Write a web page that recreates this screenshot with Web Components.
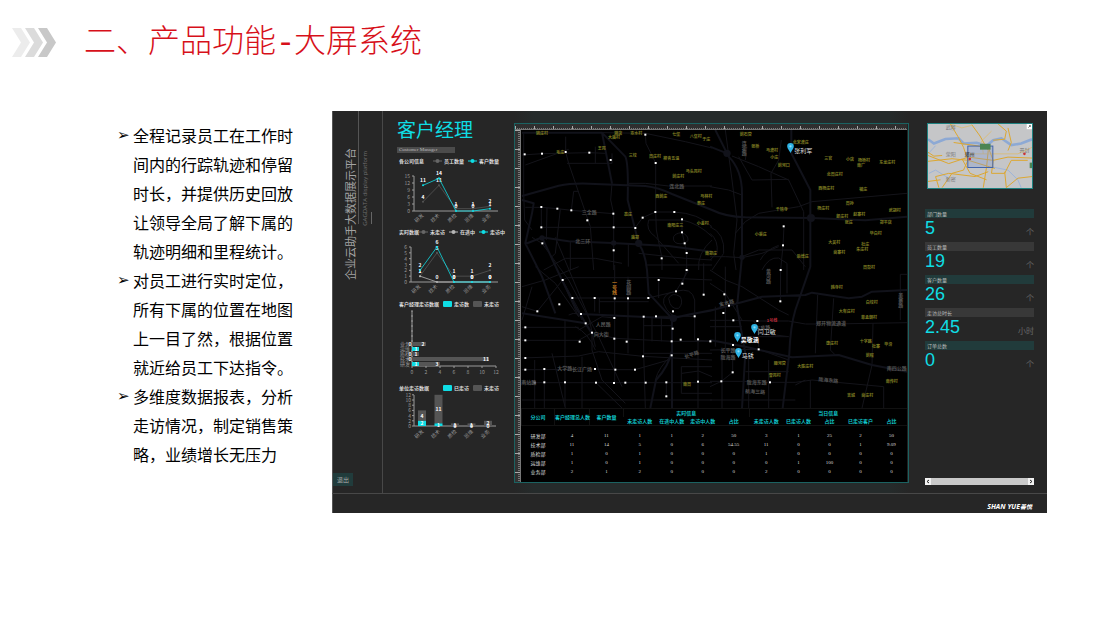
<!DOCTYPE html>
<html lang="zh-CN">
<head>
<meta charset="utf-8">
<title>产品功能-大屏系统</title>
<style>
html,body{margin:0;background:#fff}
body{font-family:"Liberation Sans","Noto Sans CJK SC",sans-serif;color:#000}
feature-list li::before{content:"➢";position:absolute;left:-16px;top:0;font-family:"DejaVu Sans",sans-serif;font-size:15px}
</style>
</head>
<body>
<feature-slide>
  <slide-header slot="head">二、产品功能<span>-</span>大屏系统</slide-header>
  <feature-list slot="text">
    <li>全程记录员工在工作时间内的行踪轨迹和停留时长，并提供历史回放让领导全局了解下属的轨迹明细和里程统计。</li>
    <li>对员工进行实时定位，所有下属的位置在地图上一目了然，根据位置就近给员工下达指令。</li>
    <li>多维度数据报表，分析走访情况，制定销售策略，业绩增长无压力</li>
  </feature-list>
  <data-wall slot="wall"></data-wall>
</feature-slide>

<script>
const define = (name, css, html) => customElements.define(name, class extends HTMLElement {
  constructor() {
    super();
    const root = this.attachShadow({mode: 'open'});
    root.innerHTML = `<style>${css}</style>${typeof html === 'function' ? html(this) : html}`;
  }
});

/* ---------- slide frame ---------- */
define('slide-header', `
:host{display:flex;align-items:center;gap:28px;padding:18px 12px 0;height:48px;color:#d7101a}
svg{flex:none}
h1{margin:0;font:300 32px/48px "Noto Sans CJK SC",sans-serif;white-space:nowrap;padding-bottom:2px}
::slotted(span){display:inline-block;width:18px;text-align:center;font-family:"Liberation Mono",monospace}
`, `<svg width="44" height="29" viewBox="0 0 44 29" aria-hidden="true">
<path fill="#ececec" d="M0 0H9L18 14.500 9 29H0L9 14.500z"/><path fill="#dbdbdb" d="M13 0H22L31 14.500 22 29H13L22 14.500z"/><path fill="#c8c8c8" d="M26 0H35L44 14.500 35 29H26L35 14.500z"/></svg>
<h1><slot></slot></h1>`);

define('feature-list', `
:host{display:block}
ul{margin:0;padding:10px 36px 0 133px;list-style:none;font:16px/29px "Noto Sans CJK SC",sans-serif}
::slotted(li){list-style:none;position:relative;display:block}
`, `<ul><slot></slot></ul>`);

define('feature-slide', `
:host{display:grid;grid-template-columns:332px minmax(0,1fr);padding:0 63px 48px 0}
.head{grid-column:1/-1;padding-bottom:45px}
::slotted(feature-list){min-width:0}
`, `<div class="head"><slot name="head"></slot></div><slot name="text"></slot><slot name="wall"></slot>`);

/* ---------- charts ---------- */
const CYAN = '#0fdde4', GRAY = '#555', PALE = '#b5b5b5';
const CATS = ['研发', '技术', '质检', '运维', '业务'];
const chartCss = `
:host{display:block}
header{display:flex;align-items:center;justify-content:space-between;height:8px;padding:0 15px 0 16px;font:bold 5px/8px "Noto Sans CJK SC",sans-serif;color:#ddd;white-space:nowrap}
h3{margin:0;font:inherit}
.keys{display:flex;gap:4px}
.keys span{display:flex;align-items:center;gap:2px}
svg{display:block;width:100%;overflow:visible}
text{font:5px "Noto Sans CJK SC",sans-serif;fill:#999}
.v{font-weight:bold;fill:#fff;text-anchor:middle}
.a{stroke:#999;stroke-width:1;fill:none}
`;
const head = (title, keys, line) => `<header><h3>${title}</h3><div class="keys">${keys.map(([n, c]) =>
  `<span><svg style="width:9px;height:6px" viewBox="0 0 9 6">${line
    ? `<path d="M0 3H9" stroke="${c}"/><circle cx="4.500" cy="3" r="2" fill="${c}"/>`
    : `<rect width="9" height="6" rx="1" fill="${c}"/>`}</svg>${n}</span>`).join('')}</div></header>`;
const catText = (x, y, t) => `<text text-anchor="end" transform="translate(${x} ${y}) rotate(-42)">${t}</text>`;

function lineChart({title, keys, x0, max, step, xs, series}) {
  const top = 11, h = 35, y = v => top + h - v * h / max;
  let s = `<path class="a" d="M${x0} ${top}V${top + h}H115"/>`;
  for (let v = 0; v <= max; v += step) s += `<path class="a" d="M${x0 - 2} ${y(v)}H${x0}"/><text x="${x0 - 4}" y="${y(v) + 2}" text-anchor="end">${v}</text>`;
  xs.forEach((x, i) => s += catText(x + 1, top + h + 5, CATS[i]));
  series.forEach(([c, vals]) => {
    s += `<polyline fill="none" stroke="${c}" stroke-width=".8" points="${vals.map((v, i) => xs[i] + ',' + y(v)).join(' ')}"/>`;
    vals.forEach((v, i) => s += `<circle cx="${xs[i]}" cy="${y(v)}" r="1" fill="${c}"/><text class="v" x="${xs[i]}" y="${y(v) - 3}">${v}</text>`);
  });
  return head(title, keys, true) + `<svg viewBox="0 0 131 54">${s}</svg>`;
}
define('company-chart', chartCss, lineChart({title: '各公司信息', keys: [['员工数量', '#666'], ['客户数量', CYAN]],
  x0: 31, max: 15, step: 3, xs: [40, 56, 73, 90, 107], series: [[GRAY, [4, 11, 1, 1, 2]], [CYAN, [11, 14, 0, 0, 1]]]}));
define('realtime-chart', chartCss, lineChart({title: '实时数据', keys: [['未走访', '#666'], ['在途中', PALE], ['走访中', CYAN]],
  x0: 28, max: 6, step: 1, xs: [37, 54, 71, 89, 107], series: [[GRAY, [1, 5, 1, 1, 2]], [PALE, [1, 0, 0, 0, 0]], [CYAN, [2, 6, 0, 0, 0]]]}));

define('manager-chart', chartCss, () => {
  const rows = [['业务', 0, 2], ['运维', 1, 0], ['质检', 0, 1], ['技术', 0, 11], ['研发', 1, 3]];
  let s = '<path class="a" d="M29 3V58H113"/>';
  for (let y = 3; y < 58; y += 5) s += `<path class="a" d="M28 ${y}H30"/>`;
  for (let v = 0; v <= 12; v += 2) s += `<path class="a" d="M${29 + v * 7} 58v2"/><text x="${29 + v * 7}" y="66" text-anchor="middle">${v}</text>`;
  rows.forEach(([n, a, b], i) => {
    const y = 34 + i * 5;
    s += `<text x="17" y="${y + 4}">${n}</text><rect x="29" y="${y}" width="${a * 7}" height="4" fill="${CYAN}"/><rect x="${29 + a * 7}" y="${y}" width="${b * 7}" height="4" fill="${GRAY}"/>`;
    s += `<text class="v" x="${a ? 33 : 27}" y="${y + 4}">${a}</text>`;
    if (b) s += `<text class="v" x="${b === 1 ? 33 : 26 + (a + b) * 7}" y="${y + 4}">${b}</text>`;
  });
  return head('客户经理走访数据', [['走访数', CYAN], ['未走访', GRAY]]) + `<svg viewBox="0 0 131 70">${s}</svg>`;
});
define('unit-chart', chartCss, () => {
  const d = [[2, 4], [1, 11], [0, 1], [0, 1], [0, 2]], y = v => 34 - v * 2.6;
  let s = '<path class="a" d="M31 3V34H113"/>';
  for (let v = 0; v <= 12; v += 2) s += `<path class="a" d="M29 ${y(v)}H31"/><text x="28" y="${y(v) + 2}" text-anchor="end">${v}</text>`;
  d.forEach(([a, b], i) => {
    const x = 39 + i * 33 / 2;
    s += `<rect x="${x - 4}" y="${y(a + b)}" width="8" height="${b * 2.6}" fill="${GRAY}"/><rect x="${x - 4}" y="${y(a)}" width="8" height="${a * 2.6}" fill="${CYAN}"/>`;
    s += `<text class="v" x="${x}" y="${y(a / 2) + 2}">${a}</text><text class="v" x="${x}" y="${y(a + b / 2) + 2}">${b}</text>` + catText(x + 2, 40, CATS[i]);
  });
  return head('单位走访数据', [['已走访', CYAN], ['未走访', GRAY]]) + `<svg viewBox="0 0 131 50">${s}</svg>`;
});

/* ---------- city map ---------- */
const MX = 27, MY = 30, MW = 1158, MH = 834;
const place = (x, y) => `left:${((x - MX) / MW * 100).toFixed(2)}%;top:${((y - MY) / MH * 100).toFixed(2)}%`;
const MAJOR = `M30 38H270L340 110Q350 130 347 240L380 370Q400 400 405 450L410 520 480 595V690Q470 740 432 780L415 864
M270 38L300 190M30 228L140 197Q185 188 250 192L400 198Q440 203 480 222L600 270Q640 290 700 292L900 294 1060 301 1185 290
M40 372L90 352Q140 360 170 364L300 369 470 378 600 395M838 30V100L895 210V440L850 570Q835 620 832 700L812 864
M594 80L645 100M610 30L650 110Q690 150 690 220V410L675 560 700 700 690 864M480 595Q540 580 594 572L750 530 880 525 900 518 1010 535 1050 530 1080 515 1185 510
M594 660L700 680 840 712 980 705 1080 735 1185 755M30 240L65 250 60 280 40 370 90 470 130 580
M207 582L480 595 600 570M480 595V864M30 580L220 610 240 640 190 560 150 480 90 352`;
const MINOR = `M35 40V220L38 300 60 330M30 105L90 101 232 98 280 100M161 50V96L170 130 235 320 245 450M165 130H300V100M250 80V130M40 135L170 88
M300 190L296 240 305 281V450M400 44L402 70 431 129V276L433 330 450 415V450M270 38L400 40 520 65 600 84M350 190L400 190 470 198H600
M40 262H88L136 266 178 271 304 281M88 261V322H370L392 293 430 276H487Q560 280 600 320M178 271L185 214H200M105 264L103 360M145 268L130 400 118 412
M175 364V450M95 450L160 415H250L330 430M349 370V440M410 300H510Q560 310 600 350M410 300Q400 330 430 350L500 430M510 298V337L518 370 524 399V450M485 350Q490 340 508 338 530 345 528 362 515 375 495 370 482 365 485 350
M380 400L520 415 600 420M400 435H600M560 450Q555 400 600 360M60 352L90 370 170 480 260 650 330 800M90 352L200 590M130 352L230 590 250 680M70 440L130 490 200 590
M30 560L76 574 152 480 181 534 207 582 221 610 240 638 310 655 480 664H600M152 480L165 473H440L600 480M181 534H410M248 534V575M262 534V580M262 545H410M308 435V790M348 470V700M307 594L270 590 200 630M30 622H200M30 661H200L240 638
M30 714L200 708 260 695 393 709 600 720M30 749H97L249 747 310 749H369L470 720M30 788H600M68 720V864M97 749V864M159 600V860M210 710V864M252 788L330 864M240 638V690L270 780 340 850M395 590V700L400 864M420 590V664M448 590V664M395 617H480M432 589H548V540Q540 500 492 514 450 520 455 550 470 590 500 590M470 535Q480 515 505 530 515 550 500 565 475 570 470 535M492 514L530 450M511 491L524 450M548 589V660L600 664M575 524V430M409 534L492 514M440 480V534M395 700H600M480 706Q440 740 430 780M508 740H600M508 740V820H600M510 760L560 753 600 770M558 658V864M463 787V829
M30 500L100 480 200 440M60 500L30 600M120 700L160 864M170 585Q200 570 210 600M190 620Q230 640 250 690M594 320Q640 340 635 400L600 450M594 340Q620 360 615 400L594 420M640 30L660 180 675 300 665 400 672 450M594 200L650 210 690 225M700 120L705 80M680 110L720 180 830 178M660 108L740 140 830 180 875 275V450M808 60L800 120 777 160 780 262M670 340L700 305 740 280 860 260 900 245 1185 220M816 319L813 376 806 450 805 545M690 410L740 390H840L880 440M745 420Q760 390 800 376M594 410L640 410 690 413 750 400 800 380M750 450Q770 410 800 414L825 430V520
M594 450L640 480 690 500 800 570 830 585M594 490L640 520 690 600M640 440V700M664 601H594M664 601L736 603H830L880 612 960 612 1185 608M917 525L910 700M965 535L955 690 970 705M1083 610L1080 735 1050 864M1140 864M594 690L740 688 830 720M630 700V864M662 700V757L628 784 594 800M710 700V864M770 720V864M594 784H690L774 787H850L900 780 1115 800V864M895 780V864M700 755H830M740 620V680M690 650H830M1185 463H1165V530M1165 540V600M850 795L880 780M594 620H690M610 560V680M725 603L750 640 830 650M30 840H600M594 840H850`;
const DOTS = `38,103 90,101 161,96 232,98 296,120 400,44 431,129 88,261 136,266 178,271 304,281 226,301 430,276 487,276 392,293 510,298 88,322 305,322 370,324 510,337 518,370 91,370 305,391 524,399 449,415 815,319 813,376 806,450 152,480 440,480 524,450 511,491 181,534 248,534 308,535 348,535 409,534 492,514 575,524 142,553 76,574 207,582 307,594 395,590 432,589 483,574 548,589 221,610 40,622 482,626 240,638 40,661 203,665 307,656 344,665 479,664 506,659 558,658 595,664 40,714 393,709 479,706 40,749 97,747 249,747 310,749 369,749 68,788 97,787 159,787 252,788 306,789 340,788 401,788 463,787 558,785 463,829 637,523 651,557 805,544 634,579 664,601 736,603 663,675 740,688 662,757 628,784 774,787`;
const VILLAGES = `姚庄村,90,38 姚店,319,38 大庙村,306,52 京水村,373,40 七堡,493,42 八堡村,551,49 于庄,583,57 毛庄,145,95 王岗,269,84 三坟,362,106 周庄村,429,107 柳青五温,478,115 马头岗村,545,154 前庄村,499,168 西前庄,448,229 马林村,583,229 祭庄,567,248 高庄,348,283 南阳庄三,490,314 小金村,572,310 庙郑,369,352 南郑庄,597,398 前石营,701,43 张桥,730,77 马渡村,780,90 小庄,787,112 北宋渡庄,866,66 前河口,815,135 三官,949,114 小店,1014,117 杨桥村,1056,119 南厂,1047,136 东龙庄村,1126,125 北周庄村,968,162 西杨庄村,943,203 毓庄,1054,208 周孙,1013,250 杨庄村,934,265 千禧寺,809,267 武胡村,1148,270 郎庄村,991,289 赵寨村,1042,283 张庄,1010,307 郑平店,1121,307 毕白村,1091,338 小渠庄,746,343 大吴村,967,367 杜庄,1060,372 朱庄村,1051,387 尚寨村,982,395 后博庄,872,409 周彭村,1071,441 南周,525,791 韩寺村,974,502 白坟村,1079,545 大有庄村,1004,572 菲孟朝村,1071,591 康庄村,960,670 十字路,1061,664 毕滑,1129,673 杜寨,1092,678 前程,1073,706 顺河营,803,730 大陈庄村,880,738 雪岗村,788,766 南传村,1139,783 吉城,1017,825 尚庄村,1066,826`;
const ROADS = `连北路,494,198,0 三全路,232,277,0 北三环,212,364,0 人民路,274,613,0 向大街,268,643,0 大学路,158,745,0 长江广场,210,747,0 长平路,540,697,-18 南站路,50,785,0 金水路,645,543,-12 东风路,752,622,-6 郑开物流通道,957,610,0 长平路,648,689,0 陇海路,648,711,0 陇海东路,734,787,0 陇海东路,947,782,6 南四公路,1154,745,0 航海三路,728,815,3`;
const VERT = `连霍路,695,83,g 花园路,349,500,g 黄河路,768,468,g 美寨路,1165,540,g 一号线,306,502,o`;
const span = (cls, t, x, y, extra = '') => `<span class="${cls}" style="${place(+x, +y)};${extra}">${t}</span>`;
const parse = s => s.split(' ').map(v => v.split(','));

define('map-pin', `
:host{position:absolute;width:7px;height:10px;margin:-4px 0 0 -3px}
svg{display:block;width:7px;height:10px}
b{position:absolute;left:7px;top:4px;font:6px/8px "Noto Sans CJK SC",sans-serif;color:#ddd;white-space:nowrap}
:host([strong]) b{font-weight:bold;color:#fff}
`, `<svg viewBox="0 0 6 9"><path d="M3 0a3 3 0 0 1 3 3C6 5 4 7 3 9 2 7 0 5 0 3a3 3 0 0 1 3-3z" fill="#2fb4e6"/><circle cx="3" cy="3" r="1" fill="#8fdcf5"/></svg><b><slot></slot></b>`);

define('city-map', `
:host{display:block;position:relative;aspect-ratio:386/278;background:#000;overflow:hidden}
svg.r{position:absolute;inset:0;width:100%;height:100%}
span{position:absolute;transform:translate(-50%,-50%);font:bold 4px/6px "Noto Sans CJK SC",sans-serif;white-space:nowrap}
.n{color:#7f7d22}
.g{color:#545454;font-size:5px}
.o{color:#c07a20}
.d{color:#c22d3c;font-size:4px}
.vt{writing-mode:vertical-rl;font-size:5px}
`, () => `<svg class="r" viewBox="${MX} ${MY} ${MW} ${MH}" preserveAspectRatio="none" fill="none" stroke-linejoin="round">
<path d="${MINOR}" stroke="#14141a" stroke-width="3"/><path d="${MAJOR}" stroke="#11121a" stroke-width="6"/>
<g fill="#11121a"><circle cx="305" cy="369" r="8"/><circle cx="380" cy="370" r="11"/><circle cx="897" cy="294" r="12"/><circle cx="484" cy="595" r="11"/><circle cx="90" cy="354" r="8"/><circle cx="645" cy="100" r="11"/><circle cx="690" cy="412" r="8"/></g>
<g fill="#fff">${parse(DOTS).map(([x, y]) => `<rect x="${x - 3}" y="${y - 3}" width="6" height="6"/>`).join('')}</g></svg>`
  + parse(VILLAGES).map(([t, x, y]) => span('n', t, x, y)).join('')
  + parse(ROADS).map(([t, x, y, r]) => span('g', t, x, y, +r ? `rotate:${r}deg` : '')).join('')
  + parse(VERT).map(([t, x, y, c]) => span(c + ' vt', t, x, y)).join('')
  + span('d', '1号线', 780, 600)
  + [['张利军', 835, 80], ['闫卫敏', 725, 625], ['马锈', 677, 697], ['吴敬涵', 674, 649, 'strong']]
    .map(([t, x, y, s = '']) => `<map-pin ${s} style="${place(x, y)}">${t}</map-pin>`).join(''));

/* ---------- visit table ---------- */
const COLS = [33, 35, 34, 33, 31, 31, 31, 34, 31, 31, 31, 31];
const ROWS = [['研发部', 4, 11, 1, 1, 2, 50, 3, 1, 25, 2, 50], ['技术部', 11, 14, 5, 0, 6, '54.55', 11, 0, 0, 1, '9.09'],
  ['质检部', 1, 0, 1, 0, 0, 0, 1, 0, 0, 0, 0], ['运维部', 1, 0, 1, 0, 0, 0, 0, 1, 100, 0, 0], ['业务部', 2, 1, 2, 0, 0, 0, 2, 0, 0, 0, 0]];
define('visit-table', `
:host{display:block;background:#000;padding:0 0 6px}
table{width:100%;border-collapse:collapse;table-layout:fixed;font:5px/9px "Liberation Serif","Noto Sans CJK SC",serif;color:#ddd;text-align:center}
th,td{padding:0;white-space:nowrap}
thead th{color:#11c9ce;font:bold 5px/8px "Noto Sans CJK SC",sans-serif}
thead tr:first-child th{border-left:1px solid #111}
tbody th{font:5px/9px "Noto Sans CJK SC",sans-serif}
thead{border-top:1px solid #111;border-bottom:1px solid #111}
tbody::before{content:"";display:block;height:5px}
`, `<table><colgroup>${COLS.map(c => `<col style="width:${(c / 3.86).toFixed(2)}%">`).join('')}</colgroup>
<thead><tr><th rowspan="2">分公司</th><th rowspan="2">客户经理总人数</th><th rowspan="2">客户数量</th><th colspan="4">实时信息</th><th colspan="5">当日信息</th></tr>
<tr>${['未走访人数', '在途中人数', '走访中人数', '占比', '未走访人数', '已走访人数', '占比', '已走访客户', '占比'].map(t => `<th>${t}</th>`).join('')}</tr></thead>
<tbody>${ROWS.map(r => `<tr><th>${r[0]}</th>${r.slice(1).map(v => `<td>${v}</td>`).join('')}</tr>`).join('')}</tbody></table>`);

/* ---------- framed map panel with rulers ---------- */
define('map-panel', `
:host{display:grid;grid-template-columns:6px minmax(0,1fr);grid-template-rows:6px auto;border:1px solid #1b6261;padding:0 1px 0 0;background:#222}
.top{grid-column:1/-1;border-bottom:1px solid #777;box-sizing:border-box;background:repeating-linear-gradient(90deg,#aaa 0 1px,transparent 1px 19px) bottom/100% 3px no-repeat,repeating-linear-gradient(90deg,#777 0 1px,transparent 1px 2px) bottom/100% 1px no-repeat,#2f2f2f}
.left{border-right:1px solid #777;box-sizing:border-box;background:repeating-linear-gradient(#aaa 0 1px,transparent 1px 19px),repeating-linear-gradient(#777 0 1px,transparent 1px 2px) right/2px 100% no-repeat,#333}
`, `<div class="top"></div><div class="left"></div><div><city-map></city-map><visit-table></visit-table></div>`);

/* ---------- right column ---------- */
define('region-map', `
:host{display:block;position:relative;aspect-ratio:105/65;border:1px solid #1e8180;box-sizing:border-box;background:#c5c6c8;margin:0 1px 0 2px;overflow:hidden}
svg{position:absolute;inset:0;width:100%;height:100%}
span{position:absolute;font:5px/6px "Noto Sans CJK SC",sans-serif;color:#777;white-space:nowrap}
`, `<svg viewBox="57 38 316 196" preserveAspectRatio="none" fill="none">
<path d="M57 85L75 98 110 84 150 82 165 98 205 96 235 105 255 88 280 82 310 103 340 98 373 85" stroke="#8da9d4" stroke-width="8"/><path d="M57 130L80 105M250 170L300 180 330 210 340 234M60 190L80 180 120 205" stroke="#9db4d8" stroke-width="3"/>
<g stroke="#dca62e" stroke-width="3"><path d="M57 125L75 137 100 135M57 135L120 160 180 140 255 150 300 140 373 143M57 153L130 145 180 150 260 175M125 38L150 80 165 110 178 150 165 180 130 190 100 234M190 40L215 75 240 120 235 170 225 234M135 95L240 110 255 150 250 190 290 190 310 150 360 150M90 234L80 200 120 190 200 200 240 185M57 215L95 210M270 38L295 60 290 85 255 88M373 200L330 205 295 234 290 185M160 145L185 190 235 210M300 120L310 95 300 50"/></g>
<path d="M125 38L160 50 190 42M250 60L220 90 225 130M180 130L330 130 373 110" stroke="#e0b95c" stroke-width="2"/>
<rect x="178" y="106" width="76" height="66" fill="#7f97cf55" stroke="#3f63ac" stroke-width="3"/><rect x="215" y="99" width="32" height="18" fill="#4c8452"/><rect x="366" y="157" width="7" height="17" fill="#4c8452"/>
<circle cx="184" cy="146" r="4" fill="#c33"/><circle cx="350" cy="130" r="4" fill="#c33"/><rect x="357" y="38" width="16" height="16" fill="#fff"/><path d="M362 49l6-6m-4 0h4v4" stroke="#333" stroke-width="2"/></svg>
<span style="left:17%;top:0">武陟</span><span style="left:17%;top:43%">荥阳</span><span style="left:35%;top:43%;color:#222">郑州</span><span style="left:88%;top:36%">开封</span><span style="left:17%;top:81%">新密</span>`);

define('stat-item', `
:host{display:block;height:33px;color:#0fdde4}
h4{margin:0;padding:0 2px;background:#383838;color:#bbb;font:5px/9px "Noto Sans CJK SC",sans-serif}
:host([tint]) h4{background:#213b3b}
div{display:flex;justify-content:space-between;align-items:flex-start}
strong{font:18px/21px "Liberation Sans",sans-serif}
small{font:8px/12px "Noto Sans CJK SC",sans-serif;color:#686868;padding-top:8px}
`, el => `<h4>${el.getAttribute('label')}</h4><div><strong>${el.getAttribute('value')}</strong><small>${el.getAttribute('unit') || '个'}</small></div>`);

define('scroll-strip', `
:host{display:flex;justify-content:space-between;height:7px;background:#c9c9c9;margin-top:auto}
button{width:6px;height:7px;padding:0;border:0;background:#f2f2f2;display:block}
svg{display:block;margin:auto}
`, `<button aria-label="左"><svg width="4" height="5" fill="none" stroke="#222"><path d="M3 1L1 2.500 3 4"/></svg></button><button aria-label="右"><svg width="4" height="5" fill="none" stroke="#222"><path d="M1 1L3 2.500 1 4"/></svg></button>`);

/* ---------- left rail ---------- */
define('side-rail', `
:host{display:flex;flex-direction:column;justify-content:space-between;align-items:flex-start;border-right:1px solid #484848}
.t{display:flex;align-items:flex-start}
h2,p{margin:0;font-weight:normal;writing-mode:vertical-rl;text-orientation:sideways;rotate:180deg;white-space:nowrap}
h2{font:11px/16px "Noto Sans CJK SC",sans-serif;color:#a3a3a3;margin:37px 0 0 10px}
.bar{width:1px;height:113px;background:#555}
p{font:6px/8px "Open Sans",sans-serif;color:#707070;margin:40px 0 0 2px}
.tick{width:1px;height:12px;margin:101px 0 0 2px;background:#666}
button{border:0;padding:0;width:20px;height:13px;background:#213c3c;color:#aaa;font:6px/13px "Noto Sans CJK SC",sans-serif;margin:0 0 7px 1px}
`, `<div class="t"><h2>企业云助手大数据展示平台</h2><div class="bar"></div><p>GAGDATA display platform</p><div class="tick"></div></div><button>退出</button>`);

define('data-wall', `
:host{display:grid;grid-template-columns:51px 131px minmax(0,1fr) 138px;grid-template-rows:auto 20px;background:#262626;box-shadow:inset 1px 0 #555}
.charts{display:flex;flex-direction:column}
.charts h2{margin:6px 0 6px 14px;font:19px/24px "Noto Sans CJK SC",sans-serif;color:#0fdde4}
.sub{margin:0 0 4px 14px;width:56px;height:6px;padding-left:2px;background:#4b4b4b;color:#bbb;font:5px/6px "Liberation Serif",serif}
company-chart{margin-bottom:9px}
realtime-chart{margin-bottom:10px}
manager-chart{margin-bottom:6px}
.mid{padding:12px 0 10px;background:linear-gradient(90deg,#262626,#252b2b 5%,#252b2b 95%,#262626)}
.right{display:flex;flex-direction:column;padding:12px 13px 8px 16px}
.stats{margin-top:20px}
footer{grid-column:1/-1;border-top:1px solid #484848;display:flex;justify-content:flex-end;padding-right:15px;color:#fff;font:italic bold 6px/26px "Noto Sans","Noto Sans CJK SC",sans-serif;height:19px}
footer span{font-size:7px}
`, `<side-rail></side-rail>
<section class="charts"><h2>客户经理</h2><div class="sub">Customer Manager</div>
<company-chart></company-chart><realtime-chart></realtime-chart><manager-chart></manager-chart><unit-chart></unit-chart></section>
<section class="mid"><map-panel></map-panel></section>
<section class="right"><region-map></region-map><div class="stats">
<stat-item tint label="部门数量" value="5"></stat-item><stat-item label="员工数量" value="19"></stat-item><stat-item tint label="客户数量" value="26"></stat-item><stat-item label="走访总时长" value="2.45" unit="小时"></stat-item><stat-item tint label="订单总数" value="0"></stat-item></div>
<scroll-strip></scroll-strip></section>
<footer><span>SHAN YUE</span>善悦</footer>`);
</script>
</body>
</html>
